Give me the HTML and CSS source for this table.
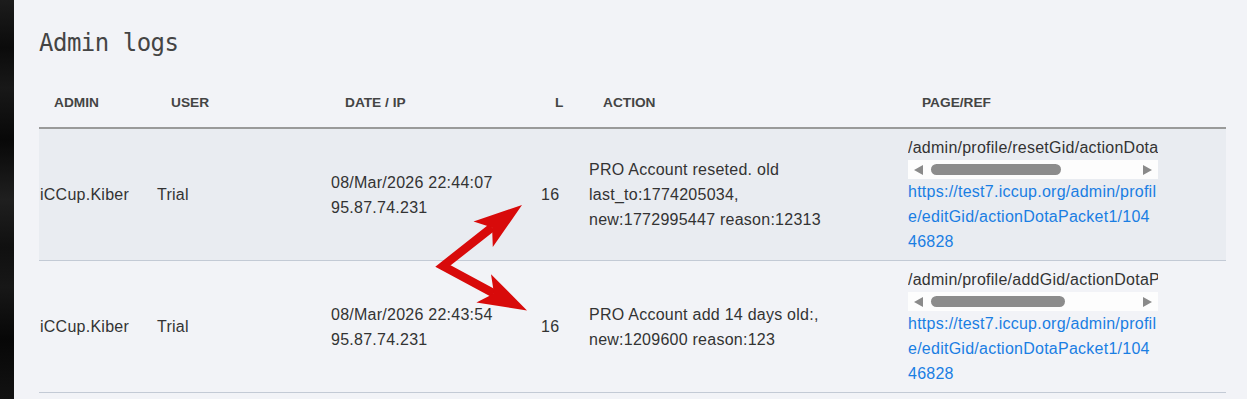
FILE: index.html
```html
<!DOCTYPE html>
<html lang="en">
<head>
<meta charset="utf-8">
<title>Admin logs</title>
<link rel="stylesheet" href="styles.css">
</head>
<body>
<div class="page">
  <div class="strip"></div>
  <main class="main">
    <h1 class="title">Admin logs</h1>
    <table class="logs">
      <colgroup>
        <col class="c-admin"><col class="c-user"><col class="c-date"><col class="c-l"><col class="c-action"><col class="c-page">
      </colgroup>
      <thead>
        <tr><th>Admin</th><th>User</th><th>Date / IP</th><th>L</th><th>Action</th><th>Page/Ref</th></tr>
      </thead>
      <tbody>
        <tr class="odd">
          <td>iCCup.Kiber</td>
          <td>Trial</td>
          <td>08/Mar/2026 22:44:07<br>95.87.74.231</td>
          <td>16</td>
          <td><div class="action">PRO Account reseted. old last_to:1774205034,<br>new:1772995447 reason:12313</div></td>
          <td>
            <div class="ref">
              <div class="path">/admin/profile/resetGid/actionDotaPacket1/10446828</div>
              <div class="sbar"><span class="arr arr-l"></span><span class="thumb" style="width:130px"></span><span class="arr arr-r"></span></div>
              <a class="link" href="#">https://test7.iccup.org/admin/profile/editGid/actionDotaPacket1/10446828</a>
            </div>
          </td>
        </tr>
        <tr>
          <td>iCCup.Kiber</td>
          <td>Trial</td>
          <td>08/Mar/2026 22:43:54<br>95.87.74.231</td>
          <td>16</td>
          <td><div class="action">PRO Account add 14 days old:,<br>new:1209600 reason:123</div></td>
          <td>
            <div class="ref">
              <div class="path">/admin/profile/addGid/actionDotaPacket1/10446828</div>
              <div class="sbar"><span class="arr arr-l"></span><span class="thumb" style="width:134px"></span><span class="arr arr-r"></span></div>
              <a class="link" href="#">https://test7.iccup.org/admin/profile/editGid/actionDotaPacket1/10446828</a>
            </div>
          </td>
        </tr>
      </tbody>
    </table>
  </main>
  <svg class="arrows" width="1247" height="399" viewBox="0 0 1247 399" aria-hidden="true">
    <polyline points="492,227.4 443,266 494,293.6" fill="none" stroke="#d80a0a" stroke-width="8.5" stroke-linejoin="miter" stroke-miterlimit="10"/>
    <polygon points="522,205 473.5,221.5 492.1,227.4 492.8,247" fill="#d80a0a"/>
    <polygon points="527,310.5 491,274.2 494,293.6 476.4,302.5" fill="#d80a0a"/>
  </svg>
</div>
</body>
</html>
```

FILE: styles.css
```css
html, body {
  margin: 0;
  padding: 0;
  background: #f2f3f7;
}

body {
  font-family: "Liberation Sans", Arial, sans-serif;
  font-size: 16px;
  color: #333;
}

.page {
  position: relative;
  display: flex;
  min-height: 399px;
  overflow: hidden;
}

.strip {
  flex: 0 0 14px;
  background: linear-gradient(180deg, #1c1c1c 0%, #0b0b0b 12%, #181818 22%, #080808 35%, #1f1f1f 50%, #101010 62%, #171717 72%, #070707 85%, #121212 100%);
}

.main {
  flex: 1;
  padding: 28px 21px 0 25px;
}

.title {
  margin: 0;
  font-family: "DejaVu Sans Mono", "Liberation Mono", monospace;
  font-weight: normal;
  font-size: 24px;
  letter-spacing: -0.5px;
  line-height: 30px;
  color: #444;
}

.logs {
  margin-top: 20px;
  width: 1187px;
  table-layout: fixed;
  border-collapse: collapse;
}

.c-admin { width: 117px; }
.c-user { width: 174px; }
.c-date { width: 210px; }
.c-l { width: 48px; }
.c-action { width: 319px; }
.c-page { width: 319px; }

.logs th {
  height: 49px;
  padding: 0 0 0 15px;
  text-align: left;
  vertical-align: middle;
  font-size: 13.7px;
  font-weight: bold;
  text-transform: uppercase;
  color: #444;
  border-bottom: 2px solid #9a9a9a;
}

.logs td {
  padding: 6px 0 6px 1px;
  vertical-align: middle;
  line-height: 25px;
  letter-spacing: 0.25px;
  border-bottom: 1px solid #c3cad5;
  white-space: nowrap;
}

.logs tr.odd td {
  background: #e9ecf1;
}

.action {
  white-space: normal;
  width: 290px;
}

.ref {
  width: 250px;
  white-space: normal;
}

.path {
  overflow: hidden;
  white-space: nowrap;
  color: #333;
}

.sbar {
  display: flex;
  align-items: center;
  height: 19px;
  background: #fdfdfd;
  padding: 0 6px;
}

.arr {
  width: 0;
  height: 0;
  border-top: 5px solid transparent;
  border-bottom: 5px solid transparent;
}

.arr-l {
  border-right: 9px solid #8a8a8a;
}

.arr-r {
  margin-left: auto;
  border-left: 9px solid #8a8a8a;
}

.thumb {
  height: 11px;
  margin-left: 8px;
  border-radius: 6px;
  background: #8c8c8c;
}

.link {
  display: block;
  color: #1a7ee3;
  text-decoration: none;
  word-break: break-all;
}

.arrows {
  position: absolute;
  left: 0;
  top: 0;
  pointer-events: none;
}
```
